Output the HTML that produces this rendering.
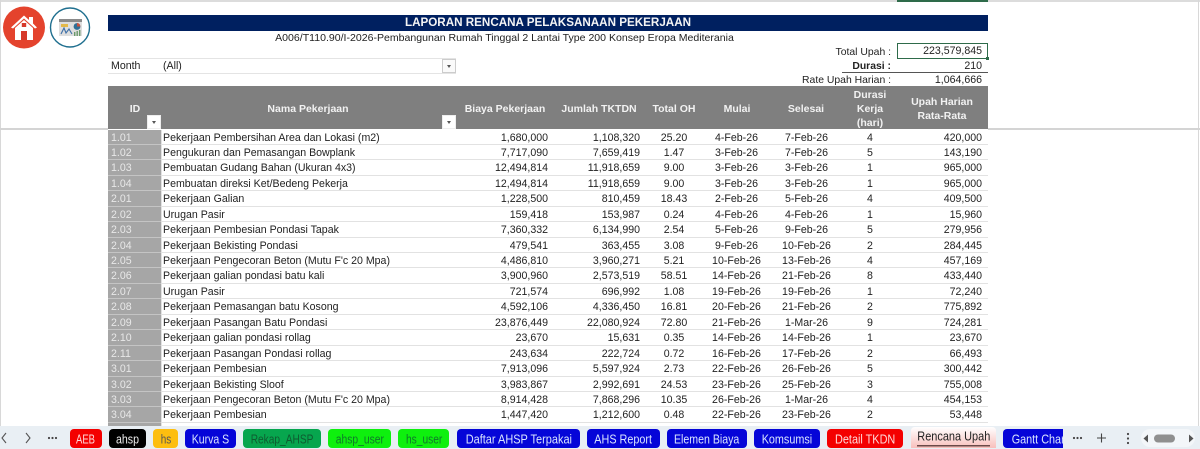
<!DOCTYPE html>
<html><head><meta charset="utf-8"><style>
html,body{margin:0;padding:0;background:#fff}
body{width:1200px;height:449px;overflow:hidden;position:relative;font-family:"Liberation Sans",sans-serif;font-size:10.6px;color:#222}
#w{position:absolute;left:0;top:0;width:1200px;height:449px;overflow:hidden;filter:blur(.3px)}
.a{position:absolute;white-space:nowrap}
#t{position:absolute;left:108px;top:129.5px;width:880px}
.r{display:grid;grid-template-columns:53px 295px 92px 92px 68px 57px 83px 44px 96px;height:15.44px;box-sizing:border-box;line-height:17px;border-bottom:1px solid #e2e2e2;white-space:nowrap}
.r span{display:block;overflow:hidden}
.r span:nth-child(1){background:#a6a6a6;color:#e8e8e8;padding-left:3px;margin-bottom:-1px;border-bottom:1px solid #c4c4c4}
.r span:nth-child(2){padding-left:1px;border-left:1px solid #e2e2e2}
.r span:nth-child(3),.r span:nth-child(4){text-align:right}
.r span:nth-child(5),.r span:nth-child(6),.r span:nth-child(7),.r span:nth-child(8){text-align:center}
.r span:nth-child(9){text-align:right;padding-right:6px}
.h{color:#f2f2f2;font-weight:bold;font-size:10.5px;text-align:center;transform:translateX(-50%);line-height:14px}
.dd{position:absolute;width:12px;height:12px;background:#fafafa;border:1px solid #ccc;box-sizing:content-box}
.dd:after{content:"";position:absolute;left:4px;top:5px;border:2px solid transparent;border-top:3px solid #555}
#tabs text{font-family:"Liberation Sans",sans-serif;font-size:12.8px}
</style></head><body><div id="w">
<div class="a" style="left:0;top:0;width:1200px;height:2px;background:#dcdcdc"></div>
<div class="a" style="left:897px;top:0;width:91px;height:1.5px;background:#2e6b4a"></div>
<div class="a" style="left:0;top:0;width:1px;height:426px;background:#d8d8d8"></div>
<div class="a" style="left:1198px;top:0;width:1px;height:426px;background:#d8d8d8"></div>
<div class="a" style="left:0;top:128px;width:108px;height:1.5px;background:#d4d4d4"></div>
<div class="a" style="left:988px;top:128px;width:212px;height:1.5px;background:#d4d4d4"></div>

<svg class="a" style="left:0;top:0" width="100" height="55" viewBox="0 0 100 55">
<circle cx="24" cy="27.5" r="21" fill="#e4432d"/>
<path d="M11 27.5 L24 15.5 L29 20 V17 H33 V23.5 L37 27.5 L35 28.5 L24 18.5 L13 28.5 Z" fill="#fff"/>
<path d="M15 28 L24 20 L33 28 V40 H15 Z" fill="#fff"/>
<rect x="21" y="31" width="6" height="9" fill="#d6392a"/>
<rect x="21.8" y="23" width="4.4" height="4" fill="#d6392a"/>
<circle cx="70" cy="27.5" r="19.5" fill="#fff" stroke="#1f6f8f" stroke-width="1.4"/>
<rect x="59" y="19" width="23" height="17" fill="#dedede"/>
<rect x="59" y="19" width="23" height="3" fill="#8a8a8a"/>
<rect x="61" y="24" width="7" height="3" fill="#e3b94a"/>
<path d="M61 34 L64 28 L66 33 L69 29 L72 34" fill="none" stroke="#3c6fa8" stroke-width="1.1"/>
<circle cx="77" cy="26.5" r="3.4" fill="#2f6f95"/>
<path d="M77 26.5 V23 A3.4 3.4 0 0 1 80.4 26.5 Z" fill="#c8503c"/>
<rect x="74" y="32" width="1.4" height="4" fill="#6a9a6a"/><rect x="76.5" y="31" width="1.4" height="5" fill="#6a9a6a"/><rect x="79" y="30" width="1.4" height="6" fill="#6a9a6a"/>
</svg>

<div class="a" style="left:108px;top:15px;width:880px;height:15.5px;background:#002060;color:#f4f4f4;font-weight:bold;font-size:11.65px;line-height:16px;text-align:center">LAPORAN RENCANA PELAKSANAAN PEKERJAAN</div>
<div class="a" style="left:108px;top:31px;width:793px;text-align:center;line-height:15px;font-size:10.55px">A006/T110.90/I-2026-Pembangunan Rumah Tinggal 2 Lantai Type 200 Konsep Eropa Mediterania</div>

<div class="a" style="left:108px;top:58px;width:348px;height:14px;border-top:1px solid #e4e4e4;border-bottom:1px solid #e4e4e4"></div>
<div class="a" style="left:111px;top:59px;line-height:15px">Month</div>
<div class="a" style="left:163px;top:59px;line-height:15px">(All)</div>
<div class="dd" style="left:442px;top:59px"></div>

<div class="a" style="right:309px;top:45px;line-height:15px;font-size:10.4px">Total Upah :</div>
<div class="a" style="left:897px;top:43px;width:91px;height:16px;border:1px solid #2e6b4a;box-sizing:border-box;text-align:right;padding-right:5px;line-height:15px">223,579,845</div>
<div class="a" style="left:986px;top:57px;width:3px;height:3px;background:#2e6b4a"></div>
<div class="a" style="right:309px;top:58.5px;line-height:15px;font-weight:bold;font-size:10.4px">Durasi :</div>
<div class="a" style="right:218px;top:58.5px;line-height:15px">210</div>
<div class="a" style="left:842px;top:72px;width:146px;height:1px;background:#555"></div>
<div class="a" style="right:309px;top:72.5px;line-height:15px;font-size:10.4px">Rate Upah Harian :</div>
<div class="a" style="right:218px;top:72.5px;line-height:15px">1,064,666</div>

<div class="a" style="left:108px;top:86px;width:880px;height:43px;background:#7f7f7f"></div>
<div class="a h" style="left:135px;top:102px">ID</div>
<div class="a h" style="left:308px;top:102px">Nama Pekerjaan</div>
<div class="a h" style="left:505px;top:102px">Biaya Pekerjaan</div>
<div class="a h" style="left:599px;top:102px">Jumlah TKTDN</div>
<div class="a h" style="left:674px;top:102px">Total OH</div>
<div class="a h" style="left:737px;top:102px">Mulai</div>
<div class="a h" style="left:806px;top:102px">Selesai</div>
<div class="a h" style="left:870px;top:88px">Durasi<br>Kerja<br>(hari)</div>
<div class="a h" style="left:942px;top:95px">Upah Harian<br>Rata-Rata</div>
<div class="dd" style="left:147px;top:115px;border-color:#eee;background:#fff"></div>
<div class="dd" style="left:442px;top:115px;border-color:#eee;background:#fff"></div>

<div id="t">
<div class="r"><span>1.01</span><span>Pekerjaan Pembersihan Area dan Lokasi (m2)</span><span>1,680,000</span><span>1,108,320</span><span>25.20</span><span>4-Feb-26</span><span>7-Feb-26</span><span>4</span><span>420,000</span></div>
<div class="r"><span>1.02</span><span>Pengukuran dan Pemasangan Bowplank</span><span>7,717,090</span><span>7,659,419</span><span>1.47</span><span>3-Feb-26</span><span>7-Feb-26</span><span>5</span><span>143,190</span></div>
<div class="r"><span>1.03</span><span>Pembuatan Gudang Bahan (Ukuran 4x3)</span><span>12,494,814</span><span>11,918,659</span><span>9.00</span><span>3-Feb-26</span><span>3-Feb-26</span><span>1</span><span>965,000</span></div>
<div class="r"><span>1.04</span><span>Pembuatan direksi Ket/Bedeng Pekerja</span><span>12,494,814</span><span>11,918,659</span><span>9.00</span><span>3-Feb-26</span><span>3-Feb-26</span><span>1</span><span>965,000</span></div>
<div class="r"><span>2.01</span><span>Pekerjaan Galian</span><span>1,228,500</span><span>810,459</span><span>18.43</span><span>2-Feb-26</span><span>5-Feb-26</span><span>4</span><span>409,500</span></div>
<div class="r"><span>2.02</span><span>Urugan Pasir</span><span>159,418</span><span>153,987</span><span>0.24</span><span>4-Feb-26</span><span>4-Feb-26</span><span>1</span><span>15,960</span></div>
<div class="r"><span>2.03</span><span>Pekerjaan Pembesian Pondasi Tapak</span><span>7,360,332</span><span>6,134,990</span><span>2.54</span><span>5-Feb-26</span><span>9-Feb-26</span><span>5</span><span>279,956</span></div>
<div class="r"><span>2.04</span><span>Pekerjaan Bekisting Pondasi</span><span>479,541</span><span>363,455</span><span>3.08</span><span>9-Feb-26</span><span>10-Feb-26</span><span>2</span><span>284,445</span></div>
<div class="r"><span>2.05</span><span>Pekerjaan Pengecoran Beton (Mutu F'c 20 Mpa)</span><span>4,486,810</span><span>3,960,271</span><span>5.21</span><span>10-Feb-26</span><span>13-Feb-26</span><span>4</span><span>457,169</span></div>
<div class="r"><span>2.06</span><span>Pekerjaan galian pondasi batu kali</span><span>3,900,960</span><span>2,573,519</span><span>58.51</span><span>14-Feb-26</span><span>21-Feb-26</span><span>8</span><span>433,440</span></div>
<div class="r"><span>2.07</span><span>Urugan Pasir</span><span>721,574</span><span>696,992</span><span>1.08</span><span>19-Feb-26</span><span>19-Feb-26</span><span>1</span><span>72,240</span></div>
<div class="r"><span>2.08</span><span>Pekerjaan Pemasangan batu Kosong</span><span>4,592,106</span><span>4,336,450</span><span>16.81</span><span>20-Feb-26</span><span>21-Feb-26</span><span>2</span><span>775,892</span></div>
<div class="r"><span>2.09</span><span>Pekerjaan Pasangan Batu Pondasi</span><span>23,876,449</span><span>22,080,924</span><span>72.80</span><span>21-Feb-26</span><span>1-Mar-26</span><span>9</span><span>724,281</span></div>
<div class="r"><span>2.10</span><span>Pekerjaan galian pondasi rollag</span><span>23,670</span><span>15,631</span><span>0.35</span><span>14-Feb-26</span><span>14-Feb-26</span><span>1</span><span>23,670</span></div>
<div class="r"><span>2.11</span><span>Pekerjaan Pasangan Pondasi rollag</span><span>243,634</span><span>222,724</span><span>0.72</span><span>16-Feb-26</span><span>17-Feb-26</span><span>2</span><span>66,493</span></div>
<div class="r"><span>3.01</span><span>Pekerjaan Pembesian</span><span>7,913,096</span><span>5,597,924</span><span>2.73</span><span>22-Feb-26</span><span>26-Feb-26</span><span>5</span><span>300,442</span></div>
<div class="r"><span>3.02</span><span>Pekerjaan Bekisting Sloof</span><span>3,983,867</span><span>2,992,691</span><span>24.53</span><span>23-Feb-26</span><span>25-Feb-26</span><span>3</span><span>755,008</span></div>
<div class="r"><span>3.03</span><span>Pekerjaan Pengecoran Beton (Mutu F'c 20 Mpa)</span><span>8,914,428</span><span>7,868,296</span><span>10.35</span><span>26-Feb-26</span><span>1-Mar-26</span><span>4</span><span>454,153</span></div>
<div class="r"><span>3.04</span><span>Pekerjaan Pembesian</span><span>1,447,420</span><span>1,212,600</span><span>0.48</span><span>22-Feb-26</span><span>23-Feb-26</span><span>2</span><span>53,448</span></div>
<div class="r"><span></span><span></span><span></span><span></span><span></span><span></span><span></span><span></span><span></span></div>
</div>

<svg id="tabs" class="a" style="left:0;top:426px" width="1200" height="23" viewBox="0 426 1200 23">
<rect x="0" y="426" width="1200" height="23" fill="#e9eff4"/>
<path d="M6 433 L2 438 L6 443" fill="none" stroke="#555" stroke-width="1.1"/>
<path d="M26 433 L30 438 L26 443" fill="none" stroke="#555" stroke-width="1.1"/>
<circle cx="49" cy="438" r="1.1" fill="#444"/><circle cx="52.5" cy="438" r="1.1" fill="#444"/><circle cx="56" cy="438" r="1.1" fill="#444"/>

<rect x="70" y="429" width="32" height="19" rx="4" fill="#f40000"/>
<text x="76" y="443.5" textLength="19" lengthAdjust="spacingAndGlyphs" fill="#ffd8d8">AEB</text>
<rect x="109" y="429" width="37" height="19" rx="4" fill="#000"/>
<text x="116" y="443.5" textLength="23" lengthAdjust="spacingAndGlyphs" fill="#eee">ahsp</text>
<rect x="153" y="429" width="25" height="19" rx="4" fill="#fdbe0f"/>
<text x="160.7" y="443.5" textLength="10.5" lengthAdjust="spacingAndGlyphs" fill="#555">hs</text>
<rect x="185" y="429" width="51" height="19" rx="4" fill="#0505d8"/>
<text x="191.7" y="443.5" textLength="37.5" lengthAdjust="spacingAndGlyphs" fill="#d8e4ff">Kurva S</text>
<rect x="243" y="429" width="78" height="19" rx="4" fill="#07a64e"/>
<text x="250.7" y="443.5" textLength="62.7" lengthAdjust="spacingAndGlyphs" fill="#0e5c30">Rekap_AHSP</text>
<rect x="328" y="429" width="63" height="19" rx="4" fill="#0ef00e"/>
<text x="335.7" y="443.5" textLength="48.3" lengthAdjust="spacingAndGlyphs" fill="#0f7a2a">ahsp_user</text>
<rect x="398" y="429" width="51" height="19" rx="4" fill="#0ef00e"/>
<text x="406" y="443.5" textLength="36.3" lengthAdjust="spacingAndGlyphs" fill="#0f7a2a">hs_user</text>
<rect x="457" y="429" width="123" height="19" rx="4" fill="#0505d8"/>
<text x="465.7" y="443.5" textLength="106.3" lengthAdjust="spacingAndGlyphs" fill="#d8e4ff">Daftar AHSP Terpakai</text>
<rect x="587" y="429" width="73" height="19" rx="4" fill="#0505d8"/>
<text x="594.3" y="443.5" textLength="57.7" lengthAdjust="spacingAndGlyphs" fill="#d8e4ff">AHS Report</text>
<rect x="667" y="429" width="80" height="19" rx="4" fill="#0505d8"/>
<text x="674" y="443.5" textLength="65.3" lengthAdjust="spacingAndGlyphs" fill="#d8e4ff">Elemen Biaya</text>
<rect x="754" y="429" width="66" height="19" rx="4" fill="#0505d8"/>
<text x="761.7" y="443.5" textLength="50.5" lengthAdjust="spacingAndGlyphs" fill="#d8e4ff">Komsumsi</text>
<rect x="827" y="429" width="76" height="19" rx="4" fill="#f40000"/>
<text x="835" y="443.5" textLength="60.3" lengthAdjust="spacingAndGlyphs" fill="#ffd8d8">Detail TKDN</text>

<defs><linearGradient id="g" x1="0" y1="0" x2="0" y2="1"><stop offset="0" stop-color="#fff"/><stop offset="1" stop-color="#f8c0bc"/></linearGradient></defs>
<path d="M911 448 V431 Q911 427 915 427 H992 Q996 427 996 431 V448 Z" fill="url(#g)"/>
<text x="917.3" y="440.7" textLength="73" lengthAdjust="spacingAndGlyphs" fill="#222">Rencana Upah</text>
<rect x="917" y="445" width="73" height="1.5" fill="#6b4a48"/>

<rect x="1003" y="429" width="66" height="19" rx="4" fill="#0505d8"/>
<text x="1011.7" y="443.5" textLength="56" lengthAdjust="spacingAndGlyphs" fill="#d8e4ff">Gantt Chart</text>
<rect x="1063" y="426" width="137" height="23" fill="#e9eff4"/>
<circle cx="1074" cy="438" r="1.1" fill="#444"/><circle cx="1077.5" cy="438" r="1.1" fill="#444"/><circle cx="1081" cy="438" r="1.1" fill="#444"/>
<path d="M1101.5 433.5 V442.5 M1097 438 H1106" stroke="#444" stroke-width="1.1"/>
<circle cx="1128" cy="434" r="1.1" fill="#444"/><circle cx="1128" cy="438.5" r="1.1" fill="#444"/><circle cx="1128" cy="443" r="1.1" fill="#444"/>
<rect x="1141" y="429" width="54" height="18" rx="9" fill="#f3f6f9"/>
<path d="M1148 434.5 L1143.5 438.5 L1148 442.5 Z" fill="#555"/>
<rect x="1154" y="434.5" width="21" height="8" rx="4" fill="#8f8f8f"/>
<path d="M1189 434.5 L1193.5 438.5 L1189 442.5 Z" fill="#555"/>
</svg>
</div></body></html>
